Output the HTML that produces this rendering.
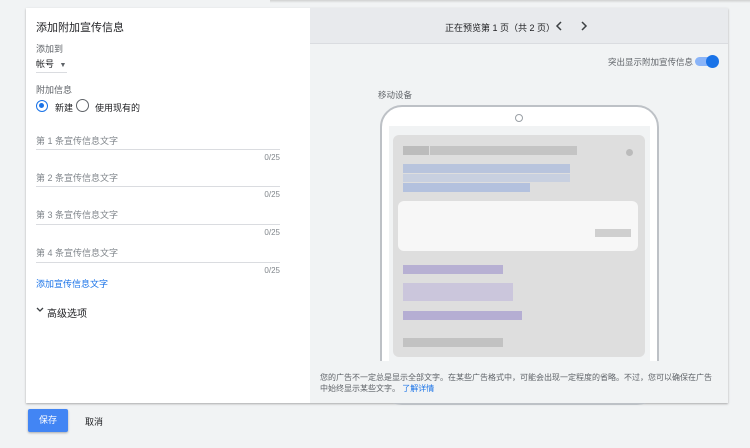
<!DOCTYPE html>
<html><head><meta charset="utf-8"><style>
*{margin:0;padding:0;box-sizing:border-box}
body{width:750px;height:448px;background:#f1f3f4;font-family:"Liberation Sans","Noto Sans CJK SC",sans-serif;position:relative;overflow:hidden;color:#3c4043}
.a{position:absolute}
.lbl{font-size:9px;color:#5f6368}
.ph{font-size:9px;color:#80868b}
.line{height:1px;background:#dadce0;width:244px}
.cnt{font-size:8px;color:#80868b;width:244px;text-align:right}
.px{position:absolute}
</style></head><body>
<div class="a" style="left:270px;top:0;width:480px;height:3px;background:linear-gradient(#d0d0d0,#f1f3f4)"></div>
<div class="a" style="left:26px;top:8px;width:702px;height:395px;box-shadow:0 1px 2px rgba(0,0,0,.3);background:#f1f3f4"></div>
<div class="a" style="left:26px;top:8px;width:284px;height:395px;background:#fff"></div>
<div class="a" style="left:36px;top:19px;font-size:11px;color:#202124">添加附加宣传信息</div>
<div class="a lbl" style="left:36px;top:42px">添加到</div>
<div class="a" style="left:36px;top:57px;font-size:9px;color:#202124">帐号 <span style="font-size:7px;color:#5f6368;margin-left:3px">▼</span></div>
<div class="a" style="left:36px;top:72px;width:31px;height:1px;background:#dadce0"></div>
<div class="a lbl" style="left:36px;top:83px">附加信息</div>
<div class="a" style="left:36px;top:100px;width:12px;height:12px;border:1.5px solid #1a73e8;border-radius:50%"><div style="margin:2px;width:5px;height:5px;background:#1a73e8;border-radius:50%"></div></div>
<div class="a" style="left:55px;top:101px;font-size:9px;color:#202124">新建</div>
<div class="a" style="left:76px;top:99px;width:13px;height:13px;border:1.5px solid #5f6368;border-radius:50%"></div>
<div class="a" style="left:95px;top:101px;font-size:9px;color:#202124">使用现有的</div>

<div class="a ph" style="left:36px;top:134px">第 1 条宣传信息文字</div>
<div class="a line" style="left:36px;top:149px"></div>
<div class="a cnt" style="left:36px;top:153px">0/25</div>
<div class="a ph" style="left:36px;top:171px">第 2 条宣传信息文字</div>
<div class="a line" style="left:36px;top:186px"></div>
<div class="a cnt" style="left:36px;top:190px">0/25</div>
<div class="a ph" style="left:36px;top:208px">第 3 条宣传信息文字</div>
<div class="a line" style="left:36px;top:224px"></div>
<div class="a cnt" style="left:36px;top:228px">0/25</div>
<div class="a ph" style="left:36px;top:246px">第 4 条宣传信息文字</div>
<div class="a line" style="left:36px;top:262px"></div>
<div class="a cnt" style="left:36px;top:266px">0/25</div>
<div class="a" style="left:36px;top:277px;font-size:9px;color:#1a73e8">添加宣传信息文字</div>
<svg class="a" style="left:36px;top:307px" width="8" height="6"><path d="M1 1L4 4L7 1" stroke="#3c4043" stroke-width="1.3" fill="none"/></svg>
<div class="a" style="left:47px;top:305px;font-size:10px;color:#202124">高级选项</div>

<div class="a" style="left:310px;top:8px;width:418px;height:36px;background:#e8eaed;border-bottom:1px solid #dadce0"></div>
<div class="a" style="left:445px;top:21px;font-size:9px;color:#202124">正在预览第 1 页（共 2 页）</div>
<svg class="a" style="left:555px;top:21px" width="8" height="10"><path d="M6 1L2 5L6 9" stroke="#3c4043" stroke-width="1.5" fill="none"/></svg>
<svg class="a" style="left:580px;top:21px" width="8" height="10"><path d="M2 1L6 5L2 9" stroke="#3c4043" stroke-width="1.5" fill="none"/></svg>
<div class="a" style="left:608px;top:56px;font-size:8.5px;color:#5f6368">突出显示附加宣传信息</div>
<div class="a" style="left:695px;top:57px;width:22px;height:9px;background:#8ab4f8;border-radius:5px"></div>
<div class="a" style="left:706px;top:55px;width:13px;height:13px;background:#1a73e8;border-radius:50%"></div>
<div class="a" style="left:378px;top:89px;font-size:8.5px;color:#5f6368">移动设备</div>

<div class="a" style="left:380px;top:105px;width:279px;height:300px;border:2px solid #bdc1c6;border-radius:22px;background:#fff"></div>
<div class="a" style="left:515px;top:114px;width:8px;height:8px;border:1px solid #9aa0a6;border-radius:50%"></div>
<div class="a" style="left:389px;top:126px;width:261px;height:235px;background:#f1f3f4"></div>
<div class="a" style="left:393px;top:135px;width:252px;height:222px;background:#dedede;border-radius:6px"></div>
<div class="px" style="left:403px;top:146px;width:26px;height:9px;background:#bcbcbc"></div>
<div class="px" style="left:430px;top:146px;width:147px;height:9px;background:#c4c4c4"></div>
<div class="px" style="left:626px;top:149px;width:7px;height:7px;border-radius:50%;background:#bbb"></div>
<div class="px" style="left:403px;top:164px;width:167px;height:9px;background:#b8c4dd"></div>
<div class="px" style="left:403px;top:174px;width:167px;height:8px;background:#c8d0e0"></div>
<div class="px" style="left:403px;top:183px;width:127px;height:9px;background:#b3c1de"></div>
<div class="px" style="left:398px;top:201px;width:240px;height:50px;background:#f7f7f7;border-radius:6px"></div>
<div class="px" style="left:595px;top:229px;width:36px;height:8px;background:#cfcfcf"></div>
<div class="px" style="left:403px;top:265px;width:100px;height:9px;background:#b7b0d3"></div>
<div class="px" style="left:403px;top:283px;width:110px;height:18px;background:#cbc6dc"></div>
<div class="px" style="left:403px;top:311px;width:119px;height:9px;background:#b5aed3"></div>
<div class="px" style="left:403px;top:338px;width:100px;height:9px;background:#c2c2c2"></div>
<div class="a" style="left:310px;top:361px;width:418px;height:42px;background:#f1f3f4"></div>
<div class="a" style="left:320px;top:372px;width:395px;font-size:8px;line-height:11px;color:#5f6368">您的广告不一定总是显示全部文字。在某些广告格式中，可能会出现一定程度的省略。不过，您可以确保在广告中始终显示某些文字。 <span style="color:#1a73e8">了解详情</span></div>

<div class="a" style="left:28px;top:409px;width:40px;height:23px;background:#4285f4;border-radius:2px;box-shadow:0 1px 2px rgba(0,0,0,.3);color:#fff;font-size:9px;text-align:center;line-height:23px">保存</div>
<div class="a" style="left:85px;top:415px;font-size:9px;color:#202124">取消</div>
</body></html>
